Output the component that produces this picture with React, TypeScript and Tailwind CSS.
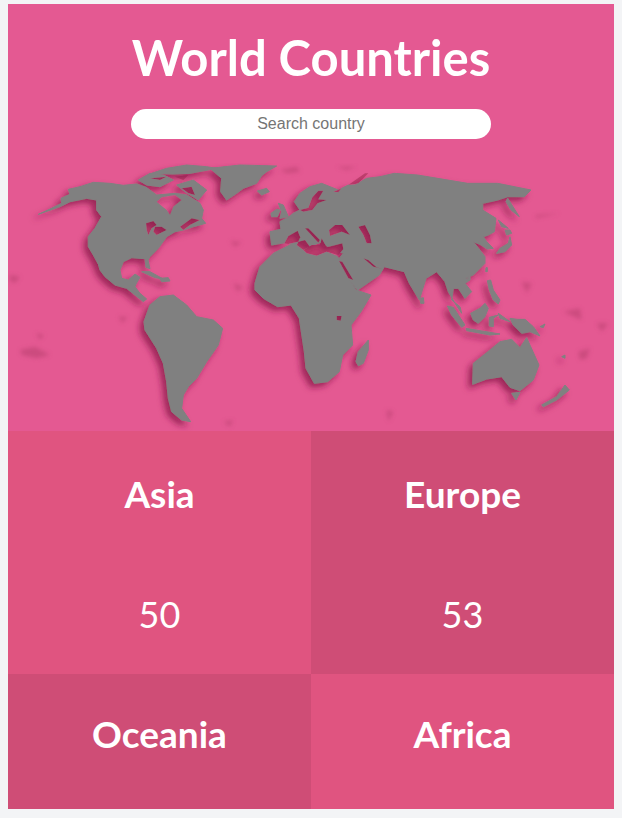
import React from "react";

// north america, coords from the crop at (60,160)
const NORTH_AMERICA = [
  "M-65,163 L-30,147 L5,130 L3,115 L30,103 L25,88 L60,80 L100,67 L150,70 L190,76 L230,72 L258,82 L290,105 L345,100 L380,105 L420,130 L430,150 L425,175 L437,190 L400,200 L370,210 L345,215 L320,230 L295,265 L270,290 L264,300 L270,326 L258,322 L255,296 L215,293 L190,305 L180,330 L185,355 L205,360 L225,342 L240,352 L228,372 L225,380 L240,400 L260,417 L250,425 L225,405 L200,385 L165,375 L135,350 L120,330 L108,285 L118,318 L100,285 L85,260 L85,230 L105,205 L125,170 L110,150 L110,120 L80,115 L30,125 L0,140 Z",
  "M235,60 L270,40 L310,45 L340,60 L300,80 L260,75 Z",
  "M275,40 L320,25 L380,15 L440,20 L470,25 L390,40 L340,42 Z",
  "M350,75 L400,60 L440,90 L415,120 L375,95 Z",
  // greenland, iceland in crop coords
  "M450,25 L540,15 L650,18 L620,35 L605,47 L590,70 L550,85 L530,100 L500,120 L482,95 L485,55 Z",
  "M592,93 L620,85 L628,95 L605,105 Z",
  // cuba, hispaniola
  "M245,335 L270,335 L310,357 L285,353 Z M298,355 L325,353 L330,363 L305,365 Z",
];

const HUDSON_BAY = "M290,125 L305,112 L345,105 L365,120 L340,140 L330,165 L320,150 L295,130 Z";

const NORTH_AMERICA_WATER = [
  // great lakes
  "M258,190 L280,183 L290,195 L275,205 L265,225 L260,210 Z",
  "M285,200 L305,200 L320,210 L290,225 L280,215 Z",
  // st lawrence
  "M360,200 L395,175 L420,180 L390,195 L370,210 Z",
  // arctic channels
  "M270,55 L320,50 L300,60 Z M345,50 L385,45 L370,60 Z M365,85 L395,80 L405,105 L385,100 Z",
];

// rest of the land, coords 3x of the page
const LAND = [
  // south america
  "M432,500 L450,450 L480,425 L520,420 L560,450 L590,485 L640,495 L668,520 L655,570 L620,620 L590,670 L565,695 L550,720 L545,760 L572,800 L545,795 L515,770 L505,730 L500,680 L490,625 L470,580 L435,525 Z",
  // africa
  "M765,385 L780,335 L820,295 L870,270 L933,270 L1013,305 L1033,350 L1068,405 L1113,420 L1083,470 L1053,510 L1058,570 L1028,600 L1018,650 L983,680 L943,685 L918,640 L913,590 L898,490 L873,450 L833,455 L790,430 L765,405 Z",
  // eurasia
  "M815,270 L810,230 L843,223 L840,200 L865,187 L880,175 L900,165 L883,140 L900,115 L930,95 L965,85 L1015,105 L1045,90 L1065,90 L1100,70 L1140,65 L1183,55 L1253,60 L1313,70 L1403,85 L1493,85 L1593,105 L1573,125 L1523,125 L1493,135 L1448,145 L1448,165 L1488,190 L1483,230 L1465,240 L1450,245 L1460,260 L1480,280 L1462,282 L1440,268 L1420,260 L1455,305 L1455,325 L1420,360 L1395,370 L1410,375 L1395,385 L1415,410 L1395,430 L1375,400 L1360,400 L1355,435 L1380,455 L1385,475 L1365,445 L1345,410 L1335,380 L1310,350 L1278,370 L1258,435 L1228,385 L1213,350 L1153,335 L1138,360 L1073,405 L1043,370 L1018,310 L1030,295 L993,280 L963,262 L933,272 L880,272 L860,262 Z",
  // kamchatka, sakhalin
  "M1523,130 L1558,185 L1533,165 L1518,140 Z M1495,195 L1525,220 L1505,215 Z",
  // uk, ireland
  "M835,145 L850,150 L865,185 L840,190 L845,170 Z M813,175 L830,163 L840,165 L832,185 L815,185 Z",
  // japan
  "M1490,295 L1500,280 L1525,265 L1530,245 L1535,270 L1515,290 Z M1515,225 L1530,225 L1535,235 L1520,240 Z",
  // taiwan, hainan, philippines
  "M1458,338 L1462,338 L1462,350 L1457,350 Z M1402,370 L1410,365 L1410,375 Z M1462,377 L1472,375 L1480,405 L1500,435 L1495,447 L1480,435 L1468,405 Z",
  // borneo, sulawesi
  "M1412,475 L1440,460 L1455,445 L1465,460 L1455,485 L1435,505 L1420,495 Z M1468,487 L1495,480 L1480,490 L1480,515 L1468,513 Z",
  // sumatra, java, seram
  "M1342,453 L1360,457 L1395,510 L1385,517 L1355,480 Z M1398,520 L1440,527 L1500,537 L1470,540 L1400,527 Z M1495,475 L1530,500 L1500,490 Z",
  // new guinea, solomons, vanuatu
  "M1530,490 L1552,493 L1575,493 L1600,515 L1620,543 L1590,530 L1565,535 L1540,510 Z M1620,515 L1635,507 L1630,518 Z M1685,605 L1695,600 L1695,610 Z",
  // australia, tasmania, nz
  "M1420,625 L1470,585 L1500,560 L1535,553 L1560,578 L1580,548 L1617,630 L1600,675 L1560,707 L1530,697 L1505,665 L1460,672 L1418,688 Z M1535,715 L1560,712 L1548,735 Z M1625,750 L1670,725 L1695,690 L1708,705 L1670,735 L1630,755 Z",
  // madagascar, sri lanka
  "M1068,620 L1075,590 L1105,555 L1105,585 L1090,625 L1075,632 Z M1260,430 L1270,428 L1272,445 L1262,445 Z",
];

// europe and near east seas, coords from the crop at (255,160)
const OLD_WORLD_WATER = [
  "M135,150 L160,143 L172,112 L190,92 L205,92 L190,118 L215,120 L188,130 L172,150 L145,155 Z",
  "M235,95 L260,85 L250,97 Z",
  "M280,75 L330,40 L340,40 L310,70 Z",
  "M88,250 L100,228 L128,212 L136,232 L130,245 L100,252 Z",
  "M130,245 L150,240 L165,260 L145,270 L125,255 Z",
  "M150,205 L160,205 L195,240 L190,248 Z",
  "M145,270 L170,255 L195,255 L200,235 L215,262 L262,250 L265,268 L250,285 L215,275 L185,287 L155,280 Z",
  "M222,210 L240,195 L262,195 L285,225 L260,215 L225,228 Z",
  "M310,200 L330,195 L345,225 L350,250 L335,250 L325,225 Z",
  "M252,303 L262,305 L295,360 L280,355 Z",
  "M325,295 L340,300 L365,322 L385,328 L355,320 Z",
  // lake victoria
  "M245,468 L260,468 L257,482 L245,480 Z",
];

const HAZE = [
  "M30,360 L60,365 L45,385 L28,375 Z",
  "M60,585 L105,575 L150,600 L110,610 L65,600 Z",
  "M108,535 L132,540 L120,555 Z",
  "M690,258 L725,262 L705,275 Z",
  "M700,385 L730,395 L712,410 Z",
  "M355,485 L382,485 L368,505 Z",
  "M670,800 L700,795 L690,815 Z",
  "M840,45 L890,35 L900,50 L860,55 Z",
  "M1610,180 L1680,175 L1605,190 Z",
  "M1565,380 L1595,385 L1580,415 Z",
  "M1690,470 L1740,460 L1745,495 Z",
  "M1735,590 L1770,580 L1760,610 L1740,615 Z",
  "M1160,765 L1180,770 L1165,800 Z",
  "M1790,505 L1825,505 L1805,530 Z",
  "M1010,35 L1070,35 L1040,45 Z",
];

const Paths = ({ list }: { list: string[] }) => (
  <>
    {list.map((d) => (
      <path key={d} d={d} />
    ))}
  </>
);

const Seas = ({ withHudson }: { withHudson?: boolean }) => (
  <>
    <g transform="translate(180,15)">
      <Paths list={withHudson ? [HUDSON_BAY, ...NORTH_AMERICA_WATER] : NORTH_AMERICA_WATER} />
    </g>
    <g transform="translate(765,15)">
      <Paths list={OLD_WORLD_WATER} />
    </g>
  </>
);

const WorldMap = () => (
  <svg viewBox="0 0 1818 804" className="block w-[606px] h-[268px]">
    <defs>
      <filter id="land-shadow" x="-5%" y="-5%" width="110%" height="110%">
        <feDropShadow dx="-12" dy="12" stdDeviation="10" floodColor="#8a1f4a" floodOpacity="0.8" />
      </filter>
      <filter id="haze-blur" x="-5%" y="-5%" width="110%" height="110%">
        <feGaussianBlur stdDeviation="7" />
      </filter>
      <mask id="seas" maskUnits="userSpaceOnUse" x="0" y="0" width="1900" height="900">
        <rect width="1900" height="900" fill="white" />
        <g fill="black">
          <Seas withHudson />
        </g>
      </mask>
    </defs>
    <g transform="translate(-24,-24)">
      <g filter="url(#haze-blur)" fill="#b83f6e" opacity="0.55">
        <Paths list={HAZE} />
      </g>
      <g fill="#bd3f6d">
        <Seas />
      </g>
      <g filter="url(#land-shadow)">
        <g mask="url(#seas)" fill="#808080" stroke="#808080" strokeWidth="3" strokeLinejoin="round">
          <g transform="translate(180,15)">
            <Paths list={NORTH_AMERICA} />
          </g>
          <Paths list={LAND} />
        </g>
      </g>
    </g>
  </svg>
);

const Tile = ({ name, count, dark }: { name: string; count?: number; dark?: boolean }) => (
  <div
    className={`flex flex-col items-center text-white ${count ? "h-[243px] pt-[41px]" : "h-[135px] pt-[38px]"} ${
      dark ? "bg-[#cf4d76]" : "bg-[#e05480]"
    }`}
  >
    <h2 className="text-[37px] leading-[44px] font-bold">{name}</h2>
    {count && <div className="mt-[77px] text-[36px] leading-[43px]">{count}</div>}
  </div>
);

export default function App() {
  return (
    <div className="min-h-[818px] bg-[#f3f4f6] px-2 pt-1 font-['Lato',sans-serif]">
      <div className="bg-[#e45992]">
        <header className="flex flex-col items-center pt-6">
          <h1 className="text-[49px] leading-[58px] font-bold text-white">World Countries</h1>
          <input
            placeholder="Search country"
            className="mt-[23px] block w-[360px] h-[30px] rounded-[15px] bg-white text-center text-[16px] font-['Liberation_Sans',sans-serif] placeholder:text-[#757575] outline-none"
          />
        </header>
        <div className="mt-6">
          <WorldMap />
        </div>
        <div className="grid grid-cols-2">
          <Tile name="Asia" count={50} />
          <Tile name="Europe" count={53} dark />
          <Tile name="Oceania" dark />
          <Tile name="Africa" />
        </div>
      </div>
    </div>
  );
}
